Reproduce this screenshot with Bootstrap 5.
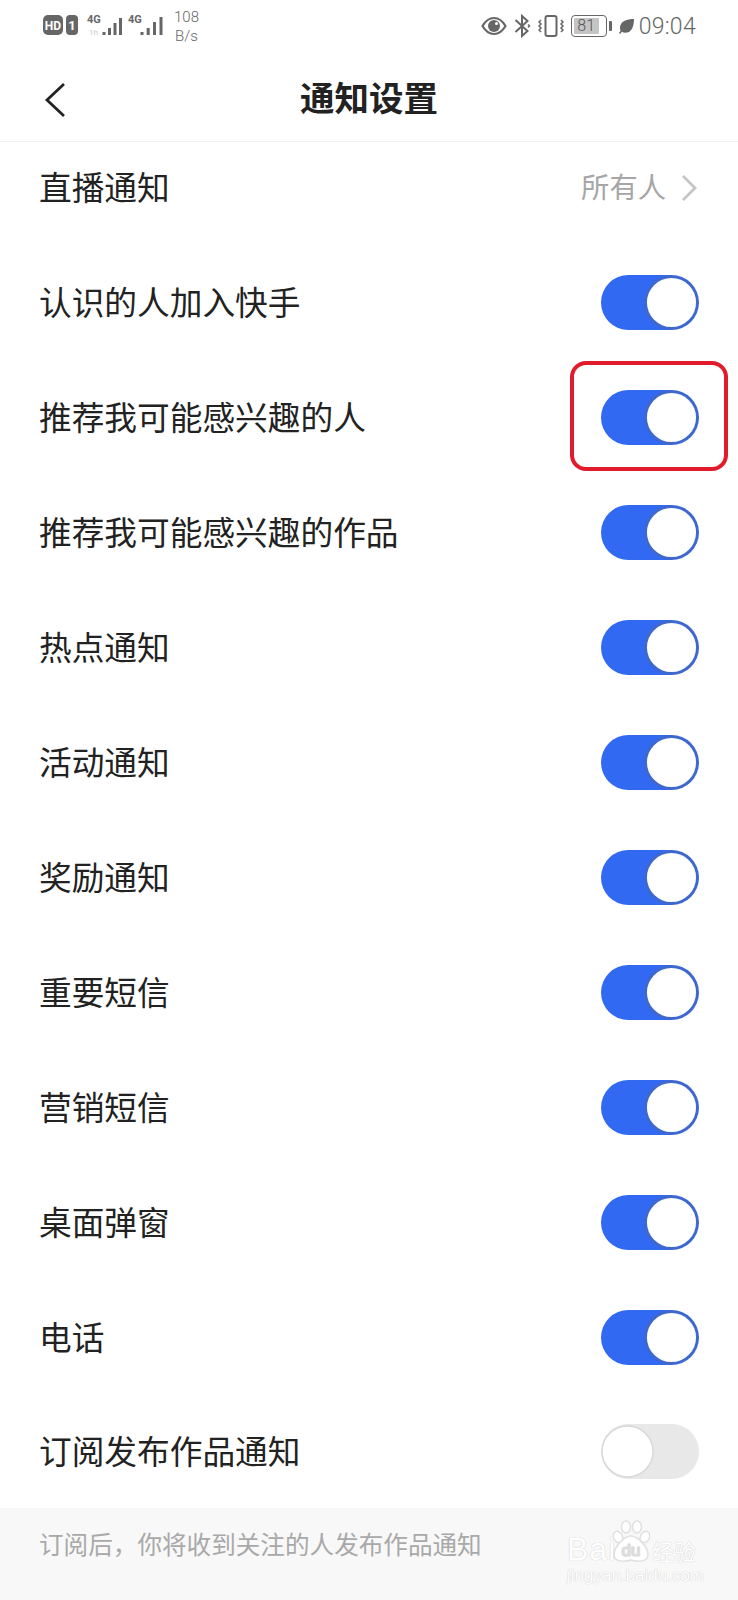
<!DOCTYPE html>
<html lang="zh-CN">
<head>
    <meta charset="UTF-8">
    <meta name="viewport" content="width=device-width, initial-scale=1.0">
    <link href="https://cdn.jsdelivr.net/npm/bootstrap@5.3.3/dist/css/bootstrap.min.css" rel="stylesheet">
    <style>
        body { width: 738px; height: 1600px; overflow: hidden; background: #fff; font-family: "Noto Sans CJK SC", "Liberation Sans", sans-serif; color: #222; }
        .status-bar { height: 52px; padding: 0 42px; color: #666; font-family: Roboto, "Liberation Sans", sans-serif; }
        .speed { font-size: 15px; line-height: 19px; text-align: center; margin-left: 10px; font-weight: 300; margin-top: 1px; }
        .st-ic { margin-right: 7px; }
        .clock { font-size: 23px; font-weight: 300; letter-spacing: .3px; line-height: 1; margin-left: 5px; }
        .batt-box { width: 36px; height: 22px; border: 1.5px solid #666; border-radius: 4px; padding: 2px; }
        .batt-fill { width: 25px; height: 100%; background: #c4c4c4; font-size: 16px; line-height: 15px; color: #555; border-radius: 1px; white-space: nowrap; text-align: center; font-weight: 300; }
        .batt-nub { width: 3px; height: 10px; background: #666; border-radius: 1px; margin: 0 7px 0 2px; }
        .head-bar { height: 90px; border-bottom: 1px solid #f1f1f1; }
        .head-title { font-size: 34.5px; font-weight: 700; color: #222; margin: 0; line-height: 1; }
        .head-back { position: absolute; left: 44px; top: 30px; }
        .set-row { height: 115px; padding: 0 39px; font-size: 32.7px; line-height: 1; }
        .set-row:last-child { height: 113px; }
        .set-name { margin-top: -3px; }
        .set-row-first { height: 92px; margin-bottom: 11px; }
        .who { font-size: 28.3px; color: #a6a6a6; margin-right: 15px; }
        .who-arrow { margin-right: 2px; }
        .form-switch.tg-wrap { padding: 0; margin: 0; min-height: 0; line-height: 0; }
        .form-switch .form-check-input.tg { width: 98px; height: 55px; margin: 0; border-radius: 28px; float: none; box-shadow: none;
            background-size: 55px 55px; background-color: #e8e8e8; border: 0;
            background-image: url("data:image/svg+xml,%3csvg xmlns='http://www.w3.org/2000/svg' viewBox='0 0 56 56'%3e%3ccircle cx='27' cy='28' r='26' fill='%23fff' stroke='%23d8d8d8' stroke-width='1.5'/%3e%3c/svg%3e"); }
        .form-switch .form-check-input.tg:checked { background-color: #3269f2;
            background-image: url("data:image/svg+xml,%3csvg xmlns='http://www.w3.org/2000/svg' viewBox='0 0 56 56'%3e%3ccircle cx='28' cy='28' r='26.5' fill='none' stroke='%233f68cf' stroke-width='3'/%3e%3ccircle cx='28' cy='28' r='25' fill='%23fff'/%3e%3c/svg%3e"); }
        .red-mark { position: absolute; left: 570px; top: 1px; width: 158px; height: 110px; border: 4.5px solid #e21b2c; border-radius: 16px; pointer-events: none; }
        .foot-note { height: 92px; background: #f8f8f8; padding: 0 39px 22px; font-size: 24.6px; color: #a9a9a9; }
        .wm { position: absolute; left: 567px; top: 12px; width: 132px; color: #fff; text-shadow: 0 0 1px #d0d0d0, 0 0 1px #d0d0d0; font-family: "Liberation Sans", sans-serif; line-height: 1; }
        .wm-main { height: 42px; }
        .wm-bai { font-size: 32px; letter-spacing: 1px; width: 45px; white-space: nowrap; line-height: 26px; }
        .wm-cn { font-size: 22px; font-family: "Noto Sans CJK SC", sans-serif; margin-left: 2px; white-space: nowrap; line-height: 24px; }
        .wm-url { font-size: 17px; margin-top: 5px; white-space: nowrap; }
    </style>
    <title>通知设置</title>
</head>
<body>

<div class="status-bar d-flex align-items-center justify-content-between">
    <div class="d-flex align-items-center">
        <svg width="122" height="24" viewBox="0 0 122 24">
            <rect x="1" y="1" width="20" height="20" rx="5" fill="#666"/>
            <text x="11" y="16" font-size="12" font-weight="700" fill="#fff" text-anchor="middle" font-family="Roboto">HD</text>
            <rect x="24" y="1" width="12" height="20" rx="4" fill="#666"/>
            <text x="30" y="16" font-size="13" font-weight="700" fill="#fff" text-anchor="middle" font-family="Roboto">1</text>
            <text x="45" y="9" font-size="11" font-weight="700" fill="#666" font-family="Roboto">4G</text>
            <text x="47" y="21" font-size="8" fill="#ccc" font-family="Roboto">1h</text>
            <path d="M62 18v3M67.500 14v7M73 9v12M78.500 4v17" stroke="#666" stroke-width="3"/>
            <text x="86" y="9" font-size="11" font-weight="700" fill="#666" font-family="Roboto">4G</text>
            <path d="M100 18v3M106.200 14v7M112.500 8v13M119 3v18" stroke="#666" stroke-width="3"/>
        </svg>
        <div class="speed">108<br>B/s</div>
    </div>
    <div class="d-flex align-items-center">
        <svg width="26" height="20" viewBox="0 0 26 20" class="st-ic">
            <path d="M1.500 10C5 4 9 2 13 2s8 2 11.500 8C21 16 17 18 13 18S5 16 1.500 10z" fill="none" stroke="#666" stroke-width="2.200"/>
            <circle cx="13" cy="10" r="6" fill="#666"/>
            <circle cx="15.500" cy="7.500" r="1.500" fill="#fff"/>
        </svg>
        <svg width="17" height="24" viewBox="0 0 17 24" class="st-ic">
            <path d="M1.500 6l12 11L8 22V2l5.500 5L1.500 18" fill="none" stroke="#666" stroke-width="2"/>
            <path d="M14 10.500l1.500 1.500-1.500 1.500" fill="none" stroke="#666" stroke-width="1.500"/>
        </svg>
        <svg width="26" height="24" viewBox="0 0 26 24" class="st-ic">
            <rect x="7.500" y="2" width="11" height="20" rx="2" fill="none" stroke="#666" stroke-width="2"/>
            <path d="M3 6L1 8l2 2-2 2 2 2-2 2 2 2M23 6l2 2-2 2 2 2-2 2 2 2-2 2" fill="none" stroke="#666" stroke-width="1.500"/>
        </svg>
        <div class="batt-box"><div class="batt-fill">81</div></div>
        <div class="batt-nub"></div>
        <svg width="15" height="15" viewBox="0 0 15 15">
            <path d="M15 0C8 0 1 2 1 9c0 1 .2 2 .6 2.800L0 14l1 1 2-2.200c1 .7 2 1 3 1C13 13.800 15 7 15 0z" fill="#666"/>
        </svg>
        <div class="clock">09:04</div>
    </div>
</div>

<div class="head-bar d-flex align-items-center justify-content-center position-relative">
    <svg class="head-back" width="24" height="36" viewBox="0 0 24 36">
        <path d="M20 2L3 18l17 16" fill="none" stroke="#222" stroke-width="2.800"/>
    </svg>
    <h1 class="head-title">通知设置</h1>
</div>

<div id="settingList"></div>

<div class="foot-note d-flex align-items-center position-relative">
    <span>订阅后，你将收到关注的人发布作品通知</span>
    <div class="wm">
        <div class="wm-main d-flex align-items-end">
            <span class="wm-bai">Bai</span>
            <svg width="38" height="42" viewBox="0 0 38 42">
                <g fill="#fff" stroke="#e0e0e0" stroke-width="1.500">
                    <ellipse cx="6" cy="17" rx="4.500" ry="6" transform="rotate(-25 6 17)"/>
                    <ellipse cx="14" cy="7" rx="4.500" ry="6"/>
                    <ellipse cx="25" cy="7" rx="4.500" ry="6"/>
                    <ellipse cx="33" cy="17" rx="4.500" ry="6" transform="rotate(25 33 17)"/>
                    <path d="M19 16c6 0 17 10 17 19 0 7-11 7-17 5-6 2-17 2-17-5 0-9 11-19 17-19z"/>
                </g>
                <text x="19" y="36" font-size="17" fill="#f8f8f8" stroke="#e0e0e0" stroke-width=".6" text-anchor="middle" font-family="Liberation Sans">du</text>
            </svg>
            <span class="wm-cn">经验</span>
        </div>
        <div class="wm-url">jingyan.baidu.com</div>
    </div>
</div>

<script>
    // rows of the list, on = switch state
    const rows = [
        { name: "认识的人加入快手", on: true },
        { name: "推荐我可能感兴趣的人", on: true, marked: true },
        { name: "推荐我可能感兴趣的作品", on: true },
        { name: "热点通知", on: true },
        { name: "活动通知", on: true },
        { name: "奖励通知", on: true },
        { name: "重要短信", on: true },
        { name: "营销短信", on: true },
        { name: "桌面弹窗", on: true },
        { name: "电话", on: true },
        { name: "订阅发布作品通知", on: false }
    ];

    let html = `
        <div class="set-row set-row-first d-flex align-items-center justify-content-between">
            <span class="set-name">直播通知</span>
            <div class="d-flex align-items-center">
                <span class="who set-name">所有人</span>
                <svg class="who-arrow" width="16" height="28" viewBox="0 0 16 28">
                    <path d="M2 2l12 12L2 26" fill="none" stroke="#c6c6c6" stroke-width="2.800"/>
                </svg>
            </div>
        </div>`;

    rows.forEach(row => {
        html += `
        <div class="set-row d-flex align-items-center justify-content-between position-relative">
            <span class="set-name">${row.name}</span>
            <div class="form-check form-switch tg-wrap">
                <input class="form-check-input tg" type="checkbox" role="switch" aria-label="${row.name}" ${row.on ? "checked" : ""}>
            </div>
            ${row.marked ? '<div class="red-mark"></div>' : ''}
        </div>`;
    });

    document.getElementById("settingList").innerHTML = html;
</script>
<script src="https://cdn.jsdelivr.net/npm/bootstrap@5.3.3/dist/js/bootstrap.bundle.min.js"></script>
</body>
</html>
